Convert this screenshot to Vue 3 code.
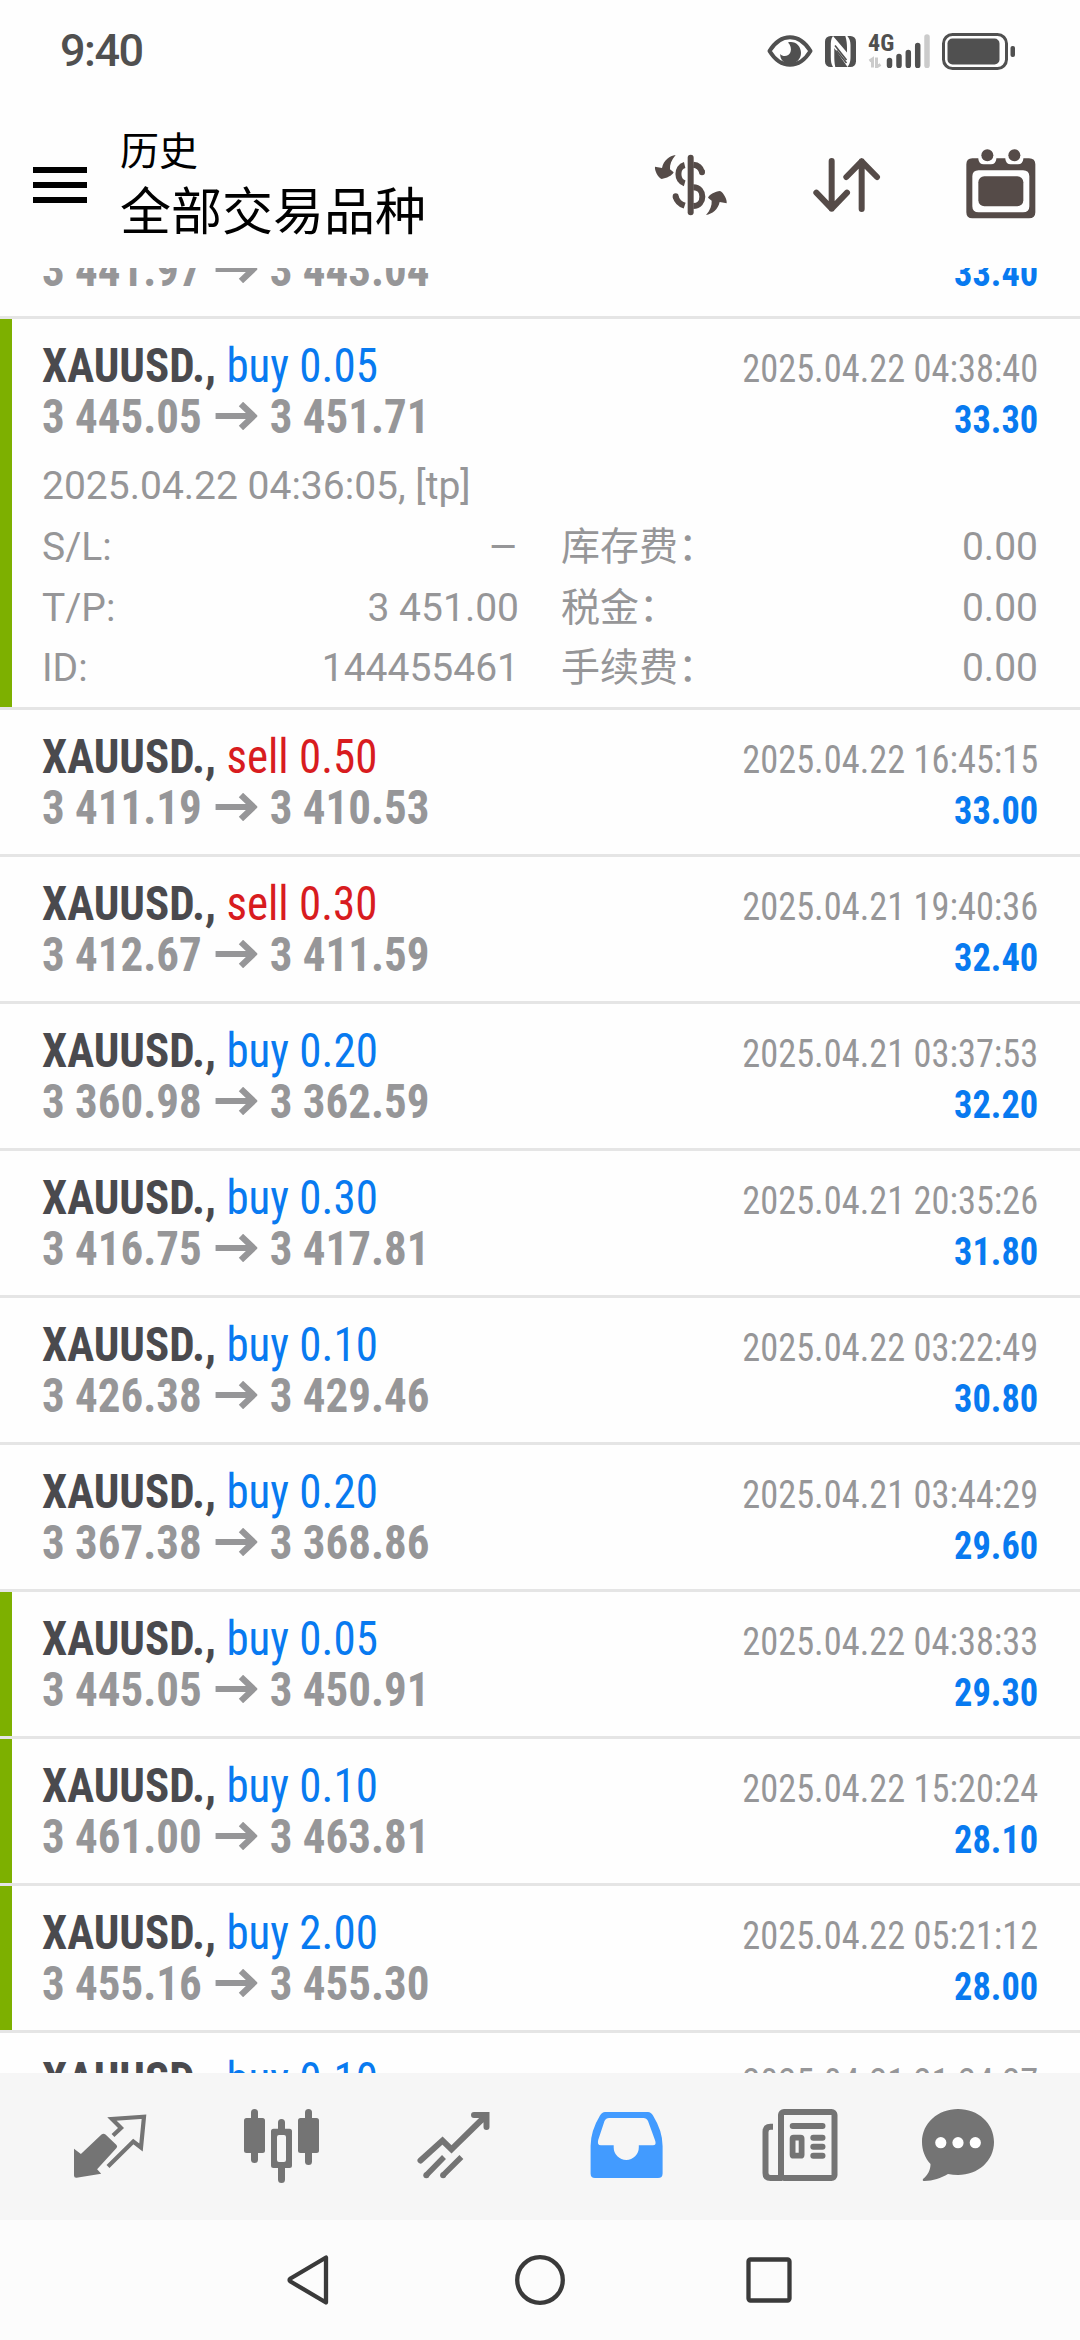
<script setup>
const deals = [
  { side: 'buy', volume: '0.20', from: '3 441.97', to: '3 443.04', time: '2025.04.22 04:10:12', profit: '33.40' },
  {
    side: 'buy', volume: '0.05', from: '3 445.05', to: '3 451.71', time: '2025.04.22 04:38:40', profit: '33.30', tp: true,
    details: {
      opened: '2025.04.22 04:36:05, [tp]',
      rows: [
        ['S/L:', '–', '库存费：', '0.00'],
        ['T/P:', '3 451.00', '税金：', '0.00'],
        ['ID:', '144455461', '手续费：', '0.00']
      ]
    }
  },
  { side: 'sell', volume: '0.50', from: '3 411.19', to: '3 410.53', time: '2025.04.22 16:45:15', profit: '33.00' },
  { side: 'sell', volume: '0.30', from: '3 412.67', to: '3 411.59', time: '2025.04.21 19:40:36', profit: '32.40' },
  { side: 'buy', volume: '0.20', from: '3 360.98', to: '3 362.59', time: '2025.04.21 03:37:53', profit: '32.20' },
  { side: 'buy', volume: '0.30', from: '3 416.75', to: '3 417.81', time: '2025.04.21 20:35:26', profit: '31.80' },
  { side: 'buy', volume: '0.10', from: '3 426.38', to: '3 429.46', time: '2025.04.22 03:22:49', profit: '30.80' },
  { side: 'buy', volume: '0.20', from: '3 367.38', to: '3 368.86', time: '2025.04.21 03:44:29', profit: '29.60' },
  { side: 'buy', volume: '0.05', from: '3 445.05', to: '3 450.91', time: '2025.04.22 04:38:33', profit: '29.30', tp: true },
  { side: 'buy', volume: '0.10', from: '3 461.00', to: '3 463.81', time: '2025.04.22 15:20:24', profit: '28.10', tp: true },
  { side: 'buy', volume: '2.00', from: '3 455.16', to: '3 455.30', time: '2025.04.22 05:21:12', profit: '28.00', tp: true },
  { side: 'buy', volume: '0.10', from: '3 420.10', to: '3 422.90', time: '2025.04.21 21:24:27', profit: '28.00' }
]
</script>

<template>
  <div class="screen">
    <div class="status">
      <span class="clock">9:40</span>
      <svg class="eye" width="46" height="32" viewBox="0 0 46 32">
        <path d="M2.5 16C8 7 15 2.2 23 2.2S38 7 43.500 16C38 25 31 29.800 23 29.800S8 25 2.500 16Z" fill="none" stroke="#505050" stroke-width="4" stroke-linejoin="round" />
        <path d="M21 7.500C28 5.500 34 11 34 18C34 24 29 29 23 29C17 29 13 24.500 13.200 19C16 22.500 22 21.500 23.500 17C24.700 13.500 23.500 10 21 7.500Z" fill="#505050" />
      </svg>
      <svg class="nfc" width="31" height="31" viewBox="0 0 31 31">
        <rect width="31" height="31" rx="5.500" fill="#505050" />
        <path d="M8 0C5.800 3 5.800 6 5.800 10V21C5.800 25 6.200 28 8 31H10.300C9.300 27 9.300 23 9.300 19V12L22.500 31C25.500 27 25.500 24 25.500 20V9C25.500 5 24.500 2.500 22.300 0H20.300C21.600 4 22 8 22 12V16.500L8 0Z" fill="#fff" />
        <path d="M10 9.500L21.500 24M11.500 14.500L21.500 27" stroke="#505050" stroke-width="1.600" />
      </svg>
      <div class="cell">
        <span class="net">4G</span>
        <svg width="63" height="34" viewBox="0 0 63 34">
          <path d="M4.500 33.500V25L1.500 27M8.500 23.500V33L12.500 30.500" fill="none" stroke="#cbcbcb" stroke-width="3" />
          <path d="M21.500 26.500V31.500M31 22.500V31.500M40.300 18.500V31.500M49.700 11.500V31.500" stroke="#505050" stroke-width="5.500" stroke-linecap="round" />
          <path d="M59 3V31.500" stroke="#cbcbcb" stroke-width="5.500" stroke-linecap="round" />
        </svg>
      </div>
      <svg class="battery" width="74" height="37" viewBox="0 0 74 37">
        <rect x="1.500" y="1.500" width="63" height="34" rx="9" fill="none" stroke="#505050" stroke-width="3" />
        <rect x="5.500" y="5.500" width="52" height="26" rx="5" fill="#505050" />
        <rect x="68.500" y="13" width="4.500" height="11" rx="2" fill="#505050" />
      </svg>
    </div>

    <header class="header">
      <svg class="menu" width="54" height="36" viewBox="0 0 54 36">
        <path d="M0 3H54M0 18H54M0 33H54" stroke="#000" stroke-width="6" />
      </svg>
      <div class="titles">
        <div class="title">历史</div>
        <div class="subtitle">全部交易品种</div>
      </div>
      <svg class="swap" width="74" height="62" viewBox="100 102 222 186">
        <g fill="none" stroke="#554b48" stroke-width="18">
          <path d="M210 113V277" stroke-linecap="round" />
          <path d="M192 135C167 141 167 183 192 190" />
          <path d="M218 134C232 135 240 142 244 156M218 202C254 202 254 258 218 258" />
          <path d="M165 230C169 245 177 252 192 257" />
          <path d="M244 156V157M165 229V230" stroke-linecap="round" />
        </g>
        <path d="M165 105C146 108 129 121 124 144L103 140C101 151 112 172 123 177C137 175 155 167 159 157L148 148C147 134 152 120 165 105Z" fill="#554b48" />
        <path d="M165 105C146 108 129 121 124 144L103 140C101 151 112 172 123 177C137 175 155 167 159 157L148 148C147 134 152 120 165 105Z" fill="#554b48" transform="rotate(180 210.500 195)" />
      </svg>
      <svg class="sort" width="68" height="56" viewBox="577 111 204 168">
        <path d="M633 123V266M587 218L633 266L679 218M723 267V124M677 171L723 124L769 171" fill="none" stroke="#554b48" stroke-width="18" stroke-linecap="round" stroke-linejoin="round" />
      </svg>
      <svg class="calendar" width="70" height="70" viewBox="1037 86 210 210">
        <path fill-rule="evenodd" fill="#554b48" d="M1056 114H1226Q1245 114 1245 132V276Q1245 294 1226 294H1056Q1038 294 1038 276V132Q1038 114 1056 114ZM1075 150Q1056 150 1056 168V258Q1056 276 1075 276H1208Q1227 276 1227 258V168Q1227 150 1208 150Z" />
        <path fill="#fff" d="M1074 113H1128V116Q1126 132 1112 132H1090Q1076 132 1074 116ZM1155 113H1209V116Q1207 132 1193 132H1171Q1157 132 1155 116Z" />
        <circle cx="1101" cy="105" r="18" fill="#554b48" />
        <circle cx="1182" cy="105" r="18" fill="#554b48" />
        <rect x="1074" y="168" width="135" height="90" rx="18" fill="#554b48" />
      </svg>
    </header>

    <main class="list">
      <div class="scroll">
        <section v-for="(d, i) in deals" :key="i" class="deal" :class="{ tp: d.tp }">
          <div class="line">
            <span class="name"><b>XAUUSD.,</b> <span :class="d.side">{{ d.side }} {{ d.volume }}</span></span>
            <span class="time">{{ d.time }}</span>
          </div>
          <div class="line">
            <span class="prices">{{ d.from }}<svg class="arrow" width="45" height="28" viewBox="0 0 42 28" preserveAspectRatio="none"><path d="M0 14H38M25.500 2L38 14L25.500 26" fill="none" stroke="#969698" stroke-width="6.200" /></svg>{{ d.to }}</span>
            <span class="profit">{{ d.profit }}</span>
          </div>
          <div v-if="d.details" class="details">
            <div class="opened">{{ d.details.opened }}</div>
            <div v-for="r in d.details.rows" :key="r[0]" class="detail">
              <div class="pair left"><span>{{ r[0] }}</span><span :class="{ dash: r[1] === '–' }">{{ r[1] }}</span></div>
              <div class="pair right"><span>{{ r[2] }}</span><span>{{ r[3] }}</span></div>
            </div>
          </div>
        </section>
      </div>
    </main>

    <nav class="tabs">
      <svg width="80" height="84" viewBox="0 0 80 84">
        <path d="M4 45.700L10.900 51L31.500 31.500Q33.500 30 35.500 31.500L46.500 42Q47.800 43.500 46.500 45L27.100 66.300L31.200 70.700L6.500 74.800Q4 75 4 72.500Z" fill="#747474" />
        <path d="M43 32.500L51 25L42 16L74 13.700L71 44.500L63.300 38.500L38 63.500" fill="none" stroke="#747474" stroke-width="4.200" />
      </svg>
      <svg class="charts" width="80" height="84" viewBox="0 0 80 84">
        <g fill="#747474">
          <rect x="4" y="15" width="21" height="35" rx="2.500" />
          <rect x="58" y="15" width="21" height="35" rx="2.500" />
          <rect x="11" y="6" width="7" height="54" rx="3.500" />
          <rect x="65" y="6" width="7" height="56" rx="3.500" />
          <path d="M38 27V19.500a3.500 3.500 0 0 1 7 0V27ZM38 64V76.500a3.500 3.500 0 0 0 7 0V64Z" />
          <path fill-rule="evenodd" d="M33.500 25.700H49.500Q52 25.700 52 28.200V62.500Q52 65 49.500 65H33.500Q31 65 31 62.500V28.200Q31 25.700 33.500 25.700ZM39 32Q37 32 37 34V57Q37 59 39 59H44Q46 59 46 57V34Q46 32 44 32Z" />
        </g>
      </svg>
      <svg class="trade" width="80" height="84" viewBox="0 0 80 84">
        <path d="M5.500 57.500L27.500 37.500L36.500 46.300L71 12.500M59 12H71.500V24" fill="none" stroke="#747474" stroke-width="6" stroke-linecap="round" />
        <path d="M11 72.500L29 54M27.800 72.500L46.400 54" fill="none" stroke="#747474" stroke-width="5.500" />
        <circle cx="11.300" cy="72.200" r="3" fill="#747474" /><circle cx="28.100" cy="72.200" r="3" fill="#747474" />
      </svg>
      <svg class="history" width="80" height="84" viewBox="0 0 80 84">
        <path fill-rule="evenodd" fill="#429bff" d="M19 9H62Q65 9 67 12.500Q76.600 28 76.600 43V70.500Q76.600 75 72 75H9Q4.600 75 4.600 70.500V43Q4.600 28 14 12.500Q16 9 19 9ZM23 15Q20 15 18.500 18L12.200 37Q10.800 42.300 15 42.300H27.700V44.500A12.500 12.500 0 0 0 52.800 44.500V42.300H67Q70.500 42.300 69.300 38L62 18Q60.500 15 57.500 15Z" />
      </svg>
      <svg class="news" width="80" height="84" viewBox="0 0 80 84">
        <g fill="none" stroke="#747474" stroke-width="6">
          <rect x="23" y="9" width="53.500" height="66" rx="3" />
          <path d="M15 23.700H12.500Q7.500 23.700 7.500 29V70Q7.500 75 12.500 75H24" />
          <path d="M34.700 23H64.500M55.300 34.700H64.500M55.300 43.800H64.500M55.300 52.700H64.500" stroke-linecap="round" />
          <rect x="34.600" y="34.700" width="9" height="18" rx="1" stroke-width="5.800" />
        </g>
      </svg>
      <svg class="chat" width="80" height="84" viewBox="0 0 80 84">
        <path fill="#747474" d="M40 6C60 6 76 20 76 39C76 58 60 72 40 72Q35 72 30 71C23 75 15 78 6.500 78Q4 78 5 76C10 72 12.500 67 12.500 61C7 55 4 47 4 39C4 20 20 6 40 6Z" />
        <g fill="#fff"><circle cx="22.800" cy="39.700" r="5.600" /><circle cx="40" cy="39.700" r="5.600" /><circle cx="57.300" cy="39.700" r="5.600" /></g>
      </svg>
    </nav>

    <footer class="system">
      <svg width="50" height="52" viewBox="0 0 50 52"><path d="M5.500 24.500L41 3.500V48.500L5.500 27.500Q3.500 26 5.500 24.500Z" fill="none" stroke="#3a3a3a" stroke-width="4.300" stroke-linejoin="round" /></svg>
      <svg width="52" height="52" viewBox="0 0 52 52"><circle cx="26" cy="26" r="22.800" fill="none" stroke="#3a3a3a" stroke-width="4.300" /></svg>
      <svg width="50" height="52" viewBox="0 0 50 52"><rect x="4.500" y="5.500" width="41" height="41" rx="2" fill="none" stroke="#3a3a3a" stroke-width="4.300" /></svg>
    </footer>
  </div>
</template>

<style>
body {
  margin: 0;
  background: #fff;
}
</style>

<style scoped>
.screen {
  width: 1080px;
  height: 2340px;
  display: flex;
  flex-direction: column;
  overflow: hidden;
  background: #fefefe;
  font-family: Roboto, "Noto Sans CJK SC", sans-serif;
}
svg {
  display: block;
  flex: none;
}
.status {
  height: 102px;
  flex: none;
  box-sizing: border-box;
  display: flex;
  align-items: center;
  padding: 0 64px 0 60px;
}
.clock {
  font-size: 45px;
  font-weight: 500;
  line-height: 52px;
  letter-spacing: -1.5px;
  color: #505050;
  margin-right: auto;
}
.nfc {
  margin-left: 12px;
}
.cell {
  display: flex;
  margin-left: 12px;
  position: relative;
}
.net {
  position: absolute;
  left: 0;
  top: -4px;
  font: 700 24px/26px "Roboto Condensed", Roboto, sans-serif;
  font-stretch: 75%;
  color: #505050;
}
.battery {
  margin-left: 11px;
}
.header {
  height: 166px;
  flex: none;
  box-sizing: border-box;
  display: flex;
  align-items: center;
  padding: 0 44px 0 33px;
}
.titles {
  margin-left: 33px;
  margin-right: auto;
  padding-bottom: 2px;
  color: #000;
}
.title {
  font-size: 39px;
  line-height: 56px;
  margin-bottom: 2px;
}
.subtitle {
  font-size: 51px;
  line-height: 62px;
}
.sort {
  margin-left: 85px;
}
.calendar {
  margin: 0 0 2px 85px;
}
.list {
  height: 1805px;
  flex: none;
  overflow: hidden;
}
.scroll {
  margin-top: -96px;
}
.deal {
  padding: 21px 42px 0 42px;
  min-height: 123px;
  border-bottom: 3px solid #e5e5e5;
}
.tp {
  background: linear-gradient(#7db000, #7db000) 0 0 / 12px 100% no-repeat padding-box;
}
.line {
  height: 51px;
  display: flex;
  justify-content: space-between;
  align-items: baseline;
  font-family: "Roboto Condensed", Roboto, sans-serif;
  font-stretch: 75%;
  font-size: 48px;
  line-height: 51px;
  white-space: nowrap;
}
.name,
.prices {
  transform: scaleX(0.937);
  transform-origin: 0 50%;
}
.time,
.profit {
  transform: scaleX(0.933);
  transform-origin: 100% 50%;
}
.name {
  color: #4a4a4e;
}
.buy {
  color: #087af0;
}
.sell {
  color: #d81c1f;
}
.prices {
  font-weight: 700;
  color: #969698;
}
.arrow {
  display: inline-block;
  margin: 0 13px 0 14.500px;
  vertical-align: 3px;
}
.time {
  font-size: 39px;
  color: #969698;
}
.profit {
  font-size: 39px;
  font-weight: 700;
  color: #087af0;
}
.details {
  height: 265px;
  padding-top: 14px;
  box-sizing: border-box;
  font-size: 39px;
  line-height: 61px;
  color: #969698;
}
.opened {
  height: 61px;
}
.detail {
  display: flex;
  height: 60.700px;
}
.pair {
  display: flex;
  justify-content: space-between;
}
.left {
  width: 477px;
}
.right {
  width: 477px;
  margin-left: 42px;
}
.dash {
  transform: scaleX(1.2);
  transform-origin: 100% 50%;
}
.tabs {
  height: 147px;
  flex: none;
  box-sizing: border-box;
  display: flex;
  align-items: flex-start;
  padding: 30px 0 0 70px;
  background: #f6f6f6;
}
.charts {
  margin-left: 90px;
}
.trade {
  margin-left: 95px;
}
.history {
  margin-left: 91px;
}
.news {
  margin-left: 92px;
}
.chat {
  margin-left: 80px;
}
.system {
  flex: 1;
  display: flex;
  justify-content: space-between;
  align-items: center;
  padding: 0 286px 0 285px;
  background: #fcfcfc;
}
</style>
